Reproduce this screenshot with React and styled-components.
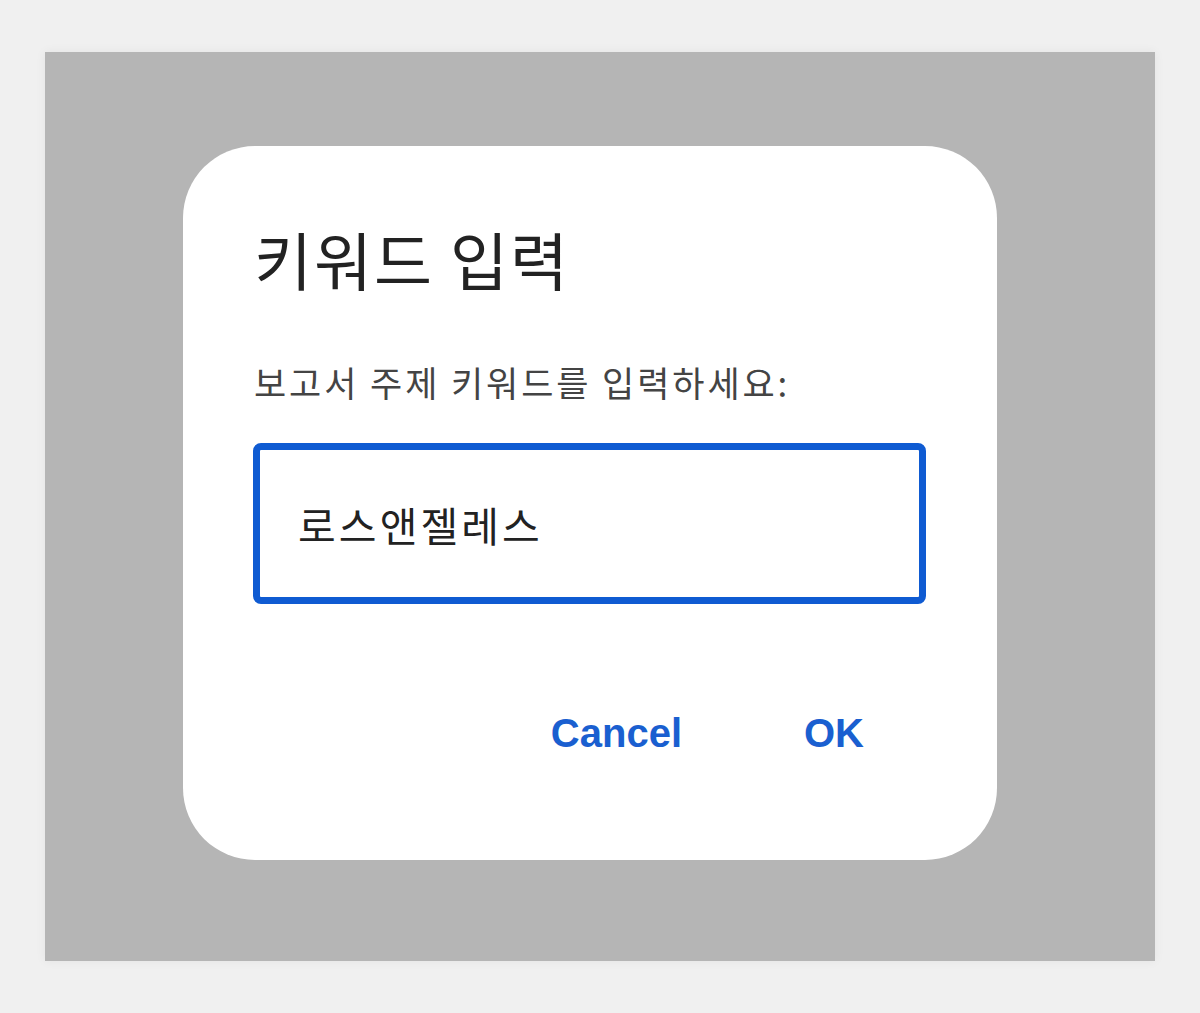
import React, { useState } from 'react'
import styled, { createGlobalStyle } from 'styled-components'

const GlobalStyle = createGlobalStyle`
    html, body {
        margin: 0;
        padding: 0;
        background: #f0f0f0;
    }
    * {
        box-sizing: border-box;
    }
`

function App() {
    const [keyword, setKeyword] = useState("로스앤젤레스");

    return (
        <Page>
            <GlobalStyle />
            <Backdrop>
                <Dialog>
                    <Title>키워드 입력</Title>
                    <Prompt>보고서 주제 키워드를 입력하세요:</Prompt>
                    <Field>
                        <Input value={keyword} onChange={e => setKeyword(e.target.value)} />
                    </Field>
                    <Actions>
                        <ActionButton>Cancel</ActionButton>
                        <ActionButton>OK</ActionButton>
                    </Actions>
                </Dialog>
            </Backdrop>
        </Page>
    )
}

export default App

const Page = styled.div`
    width: 1200px;
    height: 1013px;
    padding: 52px 45px 0;
`

const Backdrop = styled.div`
    height: 909px;
    background: #b5b5b5;
    box-shadow: 0 0 10px rgba(0, 0, 0, 0.06);
    display: flex;
    align-items: flex-start;
    padding: 94px 158px 0 138px;
`

const Dialog = styled.div`
    flex: 1;
    background: #ffffff;
    border-radius: 72px;
    padding: 74px 71px 91px 70px;
    display: flex;
    flex-direction: column;
    font-family: "Noto Sans CJK KR", "Noto Sans", sans-serif;
`

const Title = styled.h1`
    margin: 0;
    padding-left: 1px;
    font-size: 63px;
    line-height: 76px;
    font-weight: 400;
    color: #222222;
    letter-spacing: 2px;
`

const Prompt = styled.p`
    margin: 64px 0 0;
    padding-left: 1px;
    font-size: 35px;
    line-height: 44px;
    color: #444444;
    letter-spacing: 2.9px;
`

const Field = styled.div`
    margin-top: 39px;
    height: 161px;
    border: 7px solid #0f5bd2;
    border-radius: 8px;
    display: flex;
    align-items: center;
    padding: 0 38px;
`

const Input = styled.input`
    flex: 1;
    border: none;
    outline: none;
    background: none;
    padding: 0;
    font-family: "Noto Sans CJK KR", "Noto Sans", sans-serif;
    font-size: 41px;
    color: #222222;
    letter-spacing: 3.1px;
`

const Actions = styled.div`
    margin-top: 93px;
    display: flex;
    justify-content: flex-end;
    gap: 58px;
    padding-right: 30px;
`

const ActionButton = styled.button`
    background: none;
    border: none;
    padding: 12px 32px;
    font-family: "Liberation Sans", Arial, sans-serif;
    font-size: 40px;
    line-height: 48px;
    font-weight: 700;
    color: #1a5fd0;
    &:hover {
        cursor: pointer;
    }
`
